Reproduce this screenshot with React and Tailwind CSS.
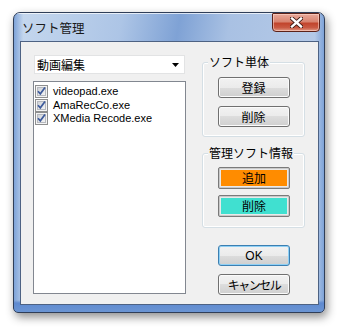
import React from "react";

const jp = { fontFamily: '"Noto Sans CJK JP", "Noto Sans", sans-serif' };
const latin = { fontFamily: '"Liberation Sans", "Noto Sans CJK JP", sans-serif' };

function CheckBox() {
  return (
    <svg width="13" height="13" viewBox="0 0 13 13" className="flex-shrink-0">
      <defs>
        <linearGradient id="cbg" x1="0" y1="0" x2="1" y2="1">
          <stop offset="0" stopColor="#cbcfd5" />
          <stop offset="1" stopColor="#f6f6f6" />
        </linearGradient>
      </defs>
      <rect x="0.5" y="0.5" width="12" height="12" fill="#f4f4f4" stroke="#8e8f8f" />
      <rect x="2.5" y="2.5" width="8" height="8" fill="url(#cbg)" stroke="#b6b9bf" />
      <path d="M3 6.2 L5.3 8.8 L10 2.6" fill="none" stroke="#3d5a9b" strokeWidth="1.7" />
    </svg>
  );
}

function Btn({ children, focused = false }) {
  return (
    <div
      className={`w-[72px] h-[21px] rounded-[3px] border flex items-center justify-center text-[12px] text-black ${
        focused
          ? "border-[#3c7fb1] shadow-[inset_0_0_0_1px_#8fd0f5]"
          : "border-[#707070] shadow-[inset_0_0_0_1px_#fbfbfb]"
      } bg-[linear-gradient(to_bottom,#f2f2f2_0%,#ebebeb_50%,#dddddd_50%,#cfcfcf_100%)]`}
      style={jp}
    >
      {children}
    </div>
  );
}

function ColorBtn({ children, color }) {
  return (
    <div className="w-[72px] h-[22px] rounded-[2px] border border-[#7a7a7a] p-[1px] bg-[#c9c9c9]">
      <div
        className={`w-full h-full border border-[#e9e9e9] flex items-center justify-center text-[12px] text-black ${color}`}
        style={jp}
      >
        {children}
      </div>
    </div>
  );
}

function Group({ label, children, className = "" }) {
  return (
    <div
      className={`relative w-[103px] h-[75px] rounded-[3px] border border-[#d5dfe5] shadow-[inset_0_0_0_1px_#ffffff] flex flex-col items-center ${className}`}
    >
      <span
        className="absolute -top-[9px] left-[5px] px-[1px] bg-[#f0f0f0] text-[12px] leading-[16px] text-black"
        style={jp}
      >
        {label}
      </span>
      {children}
    </div>
  );
}

export default function App() {
  const items = ["videopad.exe", "AmaRecCo.exe", "XMedia Recode.exe"];
  return (
    <div className="w-[341px] h-[330px] bg-white pt-[12px] pl-[13px]">
      <div className="w-[312px] h-[301px] rounded-t-[7px] rounded-b-[5px] border border-[#2f3e58] shadow-[2px_4px_10px_rgba(0,0,0,0.45)] bg-[linear-gradient(to_bottom,rgba(0,0,0,0)_96%,#5f8ad0_97%,#6b95d3_100%),linear-gradient(to_right,#7ea3d8_0%,rgba(0,0,0,0)_3%,rgba(0,0,0,0)_97%,#7ea3d8_100%),linear-gradient(100deg,#c6d8ee_0%,#adc5e6_30%,#7fa2d5_46%,#a9c1e3_60%,#bccfea_100%)] flex flex-col overflow-hidden">
        {/* Title bar */}
        <div className="h-[28px] flex justify-between pl-[8px] pr-[4px] shadow-[inset_0_1px_0_rgba(255,255,255,0.7)]">
          <span className="text-[12.5px] leading-[29px] text-[#1a1a1a]" style={jp}>
            ソフト管理
          </span>
          <div className="w-[48px] h-[19px] rounded-b-[4px] rounded-t-[1px] border border-[#5c2219] bg-[linear-gradient(to_bottom,#e9a99a_0%,#d88470_45%,#c2452d_55%,#c95a43_80%,#e19a86_100%)] shadow-[inset_0_0_0_1px_rgba(255,220,210,0.55)] flex items-center justify-center">
            <svg width="13" height="11" viewBox="0 0 13 11">
              <path
                d="M2 1.5 L11 9.5 M11 1.5 L2 9.5"
                stroke="#3d1a14"
                strokeWidth="4.2"
                strokeLinecap="square"
              />
              <path
                d="M2 1.5 L11 9.5 M11 1.5 L2 9.5"
                stroke="#ffffff"
                strokeWidth="2.4"
                strokeLinecap="square"
              />
            </svg>
          </div>
        </div>

        {/* Client area */}
        <div className="ml-[6px] w-[299px] h-[264px] border border-[#4d6283] bg-[#f0f0f0] flex">
          {/* Left column */}
          <div className="pl-[12px] pt-[13px] flex flex-col">
            <div className="ml-[1px] w-[151px] h-[19px] bg-white border border-[#e2e3e4] flex items-center justify-between pl-[2px] pr-[5px]">
              <span className="text-[12px] leading-[17px] text-black" style={jp}>
                動画編集
              </span>
              <svg width="7" height="4" viewBox="0 0 7 4">
                <path d="M0 0 H7 L3.5 4 Z" fill="#000" />
              </svg>
            </div>
            <div className="mt-[7px] w-[153px] h-[213px] bg-white border border-[#828790] pt-[3px] pl-[1px] flex flex-col">
              {items.map((it) => (
                <div key={it} className="h-[13.5px] flex items-center gap-[5px]">
                  <CheckBox />
                  <span className="text-[11px] leading-[13px] text-black" style={latin}>
                    {it}
                  </span>
                </div>
              ))}
            </div>
          </div>

          {/* Right column */}
          <div className="ml-[16px] mt-[20px] flex flex-col items-center">
            <Group label="ソフト単体">
              <div className="mt-[14px]">
                <Btn>登録</Btn>
              </div>
              <div className="mt-[8px]">
                <Btn>削除</Btn>
              </div>
            </Group>
            <Group label="管理ソフト情報" className="mt-[16px]">
              <div className="mt-[13px] ml-[1px]">
                <ColorBtn color="bg-[#ff8c00]">追加</ColorBtn>
              </div>
              <div className="mt-[6px] ml-[1px]">
                <ColorBtn color="bg-[#40e0d0]">削除</ColorBtn>
              </div>
            </Group>
            <div className="mt-[17px] ml-[1px]">
              <Btn focused>
                <span style={latin}>OK</span>
              </Btn>
            </div>
            <div className="mt-[8px] ml-[1px]">
              <Btn>
                <span className="tracking-[-1.5px]">キャンセル</span>
              </Btn>
            </div>
          </div>
        </div>
      </div>
    </div>
  );
}
